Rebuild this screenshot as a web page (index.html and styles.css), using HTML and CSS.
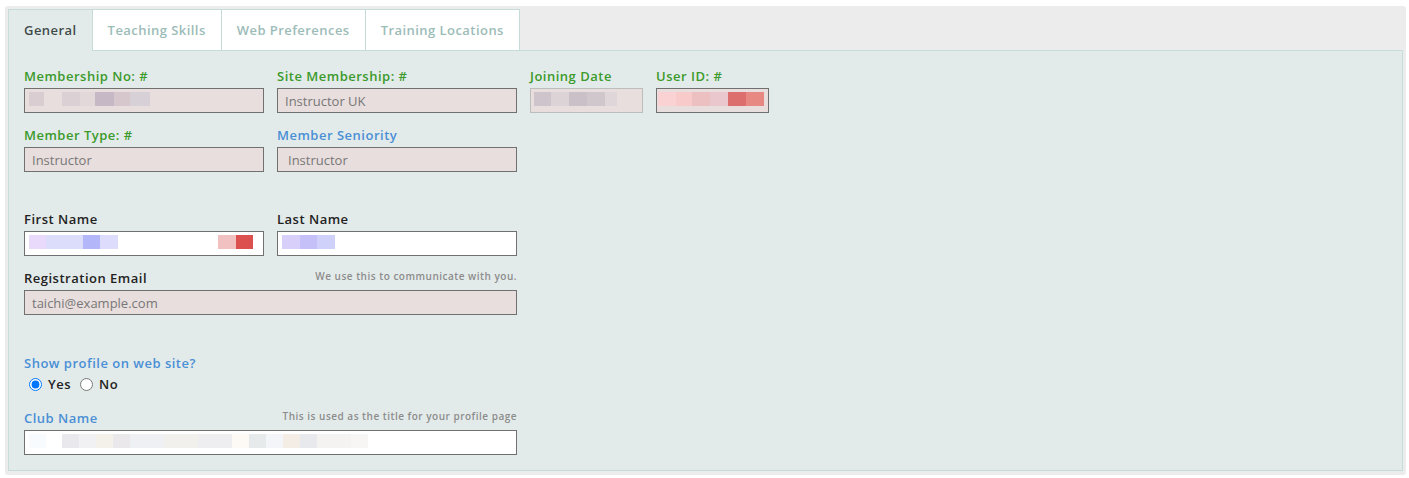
FILE: index.html
```html
<!DOCTYPE html>
<html lang="en">
<head>
<meta charset="utf-8">
<meta name="viewport" content="width=device-width, initial-scale=1.0">
<title>Member profile</title>
<link rel="stylesheet" href="styles.css">
</head>
<body>

<div class="profile">
  <ul class="tabs">
    <li class="active">General</li>
    <li>Teaching Skills</li>
    <li>Web Preferences</li>
    <li>Training Locations</li>
  </ul>

  <div class="panel">
    <div class="row">
      <div class="field wide">
        <label class="green">Membership No: #</label>
        <div class="box">
          <input class="locked" type="text" readonly>
          <span class="blur" style="left:5px;width:15px;background:#d9cdd1"></span>
          <span class="blur" style="left:38px;width:18px;background:#dbd0d3"></span>
          <span class="blur" style="left:56px;width:15px;background:#e2d8da"></span>
          <span class="blur" style="left:71px;width:19px;background:#c6b9c5"></span>
          <span class="blur" style="left:90px;width:16px;background:#d6c7cc"></span>
          <span class="blur" style="left:106px;width:20px;background:#d8d0d7"></span>
        </div>
      </div>
      <div class="field wide">
        <label class="green">Site Membership: #</label>
        <input class="locked" type="text" value="Instructor UK" readonly>
      </div>
      <div class="field narrow">
        <label class="green">Joining Date</label>
        <div class="box">
          <input class="locked soft" type="text" readonly>
          <span class="blur" style="left:4px;width:17px;background:#cec5cc"></span>
          <span class="blur" style="left:21px;width:18px;background:#dcd3d7"></span>
          <span class="blur" style="left:39px;width:18px;background:#c9c0c8"></span>
          <span class="blur" style="left:57px;width:18px;background:#d0c7cd"></span>
          <span class="blur" style="left:75px;width:12px;background:#ded6d9"></span>
        </div>
      </div>
      <div class="field narrow">
        <label class="green">User ID: #</label>
        <div class="box">
          <input class="locked" type="text" readonly>
          <span class="blur" style="left:2px;width:18px;background:#fbd2d3"></span>
          <span class="blur" style="left:20px;width:16px;background:#f9caca"></span>
          <span class="blur" style="left:36px;width:18px;background:#ecc0c1"></span>
          <span class="blur" style="left:54px;width:18px;background:#e9c7cd"></span>
          <span class="blur" style="left:72px;width:18px;background:#dd6e6e"></span>
          <span class="blur" style="left:90px;width:18px;background:#e88883"></span>
        </div>
      </div>
    </div>

    <div class="row">
      <div class="field wide">
        <label class="green">Member Type: #</label>
        <input class="locked" type="text" value="Instructor" readonly>
      </div>
      <div class="field wide">
        <label class="blue">Member Seniority</label>
        <select class="locked pick" disabled>
          <option>Instructor</option>
        </select>
      </div>
    </div>

    <div class="row gap-above">
      <div class="field wide">
        <label>First Name</label>
        <div class="box">
          <input type="text">
          <span class="blur" style="left:5px;width:17px;background:#e9d9fb"></span>
          <span class="blur" style="left:22px;width:37px;background:#dcdcfb"></span>
          <span class="blur" style="left:59px;width:17px;background:#b3b7fa"></span>
          <span class="blur" style="left:76px;width:18px;background:#dddcfc"></span>
          <span class="blur" style="left:194px;width:18px;background:#f1c1c1"></span>
          <span class="blur" style="left:212px;width:17px;background:#dc5050"></span>
        </div>
      </div>
      <div class="field wide">
        <label>Last Name</label>
        <div class="box">
          <input type="text">
          <span class="blur" style="left:5px;width:18px;background:#d8d0fa"></span>
          <span class="blur" style="left:23px;width:17px;background:#c6c0f9"></span>
          <span class="blur" style="left:40px;width:18px;background:#d0d1fb"></span>
        </div>
      </div>
    </div>

    <div class="row">
      <div class="field full">
        <div class="label-line">
          <label>Registration Email</label>
          <span class="hint">We use this to communicate with you.</span>
        </div>
        <input class="locked" type="text" value="taichi@example.com" readonly>
      </div>
    </div>

    <div class="question">
      <label class="blue">Show profile on web site?</label>
      <div class="choices">
        <label class="choice"><input type="radio" name="show" checked> Yes</label>
        <label class="choice"><input type="radio" name="show"> No</label>
      </div>
    </div>

    <div class="row last">
      <div class="field full">
        <div class="label-line">
          <label class="blue">Club Name</label>
          <span class="hint">This is used as the title for your profile page</span>
        </div>
        <div class="box">
          <input type="text">
          <span class="blur" style="left:5px;width:17px;background:#f7fbfd"></span>
          <span class="blur" style="left:38px;width:17px;background:#e9e8ec"></span>
          <span class="blur" style="left:55px;width:17px;background:#f1f0f3"></span>
          <span class="blur" style="left:72px;width:17px;background:#f4f1ea"></span>
          <span class="blur" style="left:89px;width:17px;background:#ebe8ec"></span>
          <span class="blur" style="left:106px;width:34px;background:#eff0f3"></span>
          <span class="blur" style="left:140px;width:34px;background:#f2f0ec"></span>
          <span class="blur" style="left:174px;width:34px;background:#eeedf0"></span>
          <span class="blur" style="left:208px;width:17px;background:#fdfaf6"></span>
          <span class="blur" style="left:225px;width:17px;background:#e7eaea"></span>
          <span class="blur" style="left:242px;width:17px;background:#f3f5f8"></span>
          <span class="blur" style="left:259px;width:17px;background:#f3ede5"></span>
          <span class="blur" style="left:276px;width:17px;background:#e8e9ed"></span>
          <span class="blur" style="left:293px;width:34px;background:#f5f3f2"></span>
          <span class="blur" style="left:327px;width:17px;background:#f8f6f4"></span>
        </div>
      </div>
    </div>
  </div>
</div>

</body>
</html>
```

FILE: styles.css
```css
html, body {
  margin: 0;
  background: #ffffff;
  font-family: 'Open Sans', 'Helvetica', 'Arial', sans-serif;
  color: #222;
}

.profile {
  margin: 6px 3px 4px 5px;
  padding: 3px 3px 4px 3px;
  background: #ececec;
  border-radius: 3px;
}

/* tab strip */
.tabs {
  list-style: none;
  margin: 0;
  padding: 0;
  display: flex;
}

.tabs li {
  padding: 0 15px;
  height: 40px;
  line-height: 40px;
  font-size: 13px;
  font-weight: 600;
  letter-spacing: 0.45px;
  color: #9cbcb8;
  background: #ffffff;
  border: 1px solid #c6dcd8;
  border-bottom: none;
  margin-right: -1px;
}

.tabs li.active {
  color: #3f4b4b;
  background: #e3ebea;
  position: relative;
  margin-bottom: -1px;
  height: 41px;
  z-index: 1;
}

/* tab body */
.panel {
  background: #e3ebea;
  border: 1px solid #c6dcd8;
  padding: 16px 15px 15px 15px;
}

.row {
  display: flex;
  gap: 13px;
  margin-bottom: 13px;
}

.row.gap-above {
  margin-top: 38px;
}

.row.last {
  margin-bottom: 0;
}

.field {
  display: flex;
  flex-direction: column;
}

.field.wide { width: 240px; }
.field.narrow { width: 113px; }
.field.full { width: 493px; }

label {
  font-size: 13px;
  font-weight: 600;
  line-height: 18px;
  letter-spacing: 0.5px;
  color: #222;
}

.field > label,
.label-line {
  margin-bottom: 3px;
}

.green { color: #3b9a2b; }
.blue { color: #4a8fd5; }

.label-line {
  display: flex;
  justify-content: space-between;
  align-items: flex-start;
}

.hint {
  font-size: 10px;
  font-weight: 600;
  line-height: 14px;
  letter-spacing: 0.5px;
  color: #8c8c8c;
}

input[type=text], select {
  box-sizing: border-box;
  width: 100%;
  height: 25px;
  margin: 0;
  padding: 0 7px;
  border: 1px solid #707070;
  border-radius: 0;
  background: #ffffff;
  font-family: 'Open Sans', 'Helvetica', 'Arial', sans-serif;
  font-size: 13px;
  color: #777;
  outline: none;
}

.locked { background: #e8dedd !important; }
.soft { border-color: #bdbdbd !important; }

select.pick {
  appearance: none;
  -webkit-appearance: none;
  padding-left: 10px;
  opacity: 1;
}

/* pixelated blocks over the hidden values */
.box {
  position: relative;
}

.blur {
  position: absolute;
  top: 4px;
  height: 14px;
}

.question {
  margin-top: 39px;
  margin-bottom: 16px;
}

.question > label {
  display: block;
  margin-bottom: 3px;
}

.choices {
  display: flex;
  gap: 9px;
  padding-left: 5px;
}

.choice {
  display: flex;
  align-items: center;
  gap: 6px;
  color: #222;
}

.choice input {
  margin: 0;
  width: 13px;
  height: 13px;
}
```
